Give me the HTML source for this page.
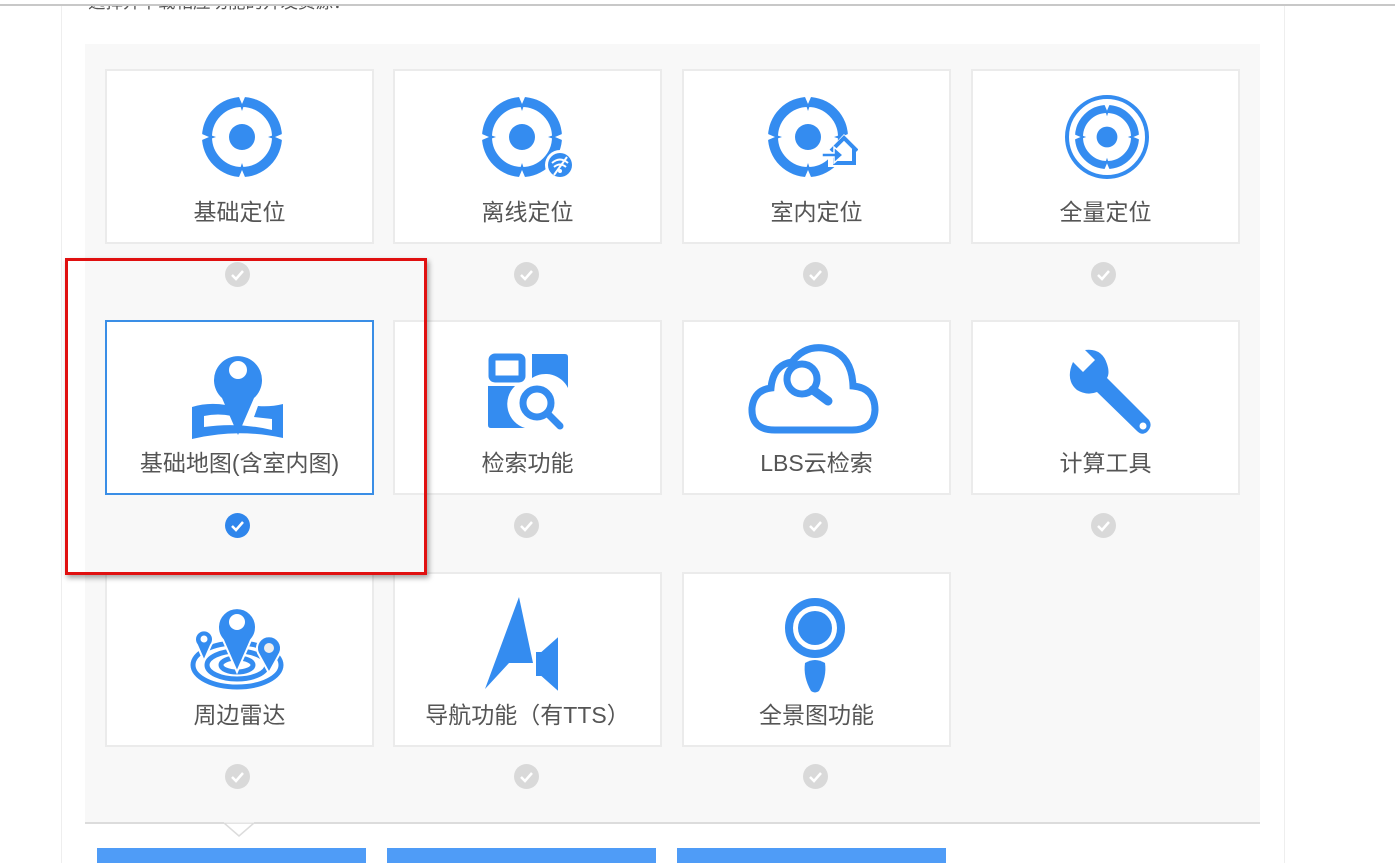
<!DOCTYPE html>
<html><head><meta charset="utf-8">
<style>
*{margin:0;padding:0;box-sizing:border-box}
body{width:1395px;height:863px;overflow:hidden;background:#fff;position:relative;font-family:"Liberation Sans","Noto Sans CJK SC",sans-serif;color:#555}
.abs{position:absolute}
.card{position:absolute;width:269px;height:175px;background:#fff;border:2px solid #ebebeb}
.card.sel{border:2px solid #3a8ee6}
.lbl{position:absolute;left:0;width:100%;text-align:center;font-size:23px;line-height:28px;color:#555;top:127px}
.chk{position:absolute;width:25px;height:25px;border-radius:50%;background:#d9d9d9}
.chk.on{background:#2f86ec}
.chk svg{position:absolute;left:0;top:0}
.ic{position:absolute;width:100px;height:100px}
.btn{position:absolute;top:848px;height:15px;width:269px;background:#4f9cf7}
</style></head><body>
<div class="abs" style="left:0;top:4px;width:1395px;height:2px;background:#c8c8c8"></div>
<div class="abs" style="left:61px;top:6px;width:1px;height:857px;background:#eee"></div>
<div class="abs" style="left:1284px;top:6px;width:1px;height:857px;background:#eee"></div>
<div class="abs" style="left:88px;top:-10px;font-size:17.5px;color:#555;line-height:24px">选择并下载相应功能的开发资源：</div>
<div class="abs" style="left:0;top:0;width:1395px;height:6px;background:#fff"></div>
<div class="abs" style="left:0;top:4px;width:1395px;height:2px;background:#c8c8c8"></div>
<div class="abs" style="left:85px;top:44px;width:1175px;height:778px;background:#f8f8f8"></div>
<div class="abs" style="left:85px;top:822px;width:1175px;height:2px;background:#dcdcdc"></div>
<svg class="abs" style="left:224px;top:822px" width="30" height="16"><polygon points="0,1 15,14 30,1" fill="#fff" stroke="#dcdcdc" stroke-width="1.5"/><rect x="0" y="-2" width="30" height="2.5" fill="#fff"/></svg>

<svg width="0" height="0" style="position:absolute">
<defs>
<g id="tgt">
<circle cx="50" cy="50" r="35" fill="none" stroke="#348cf0" stroke-width="10"/>
<circle cx="50" cy="50" r="13" fill="#348cf0"/>
<polygon points="46,12 54,12 50,24" fill="#348cf0"/>
<polygon points="46,88 54,88 50,76" fill="#348cf0"/>
<polygon points="12,46 12,54 24,50" fill="#348cf0"/>
<polygon points="88,46 88,54 76,50" fill="#348cf0"/>
<polygon points="47,10 53,10 50,17" fill="#fff"/>
<polygon points="47,90 53,90 50,83" fill="#fff"/>
<polygon points="10,47 10,53 17,50" fill="#fff"/>
<polygon points="90,47 90,53 83,50" fill="#fff"/>
</g>
</defs>
</svg>

<div class="card" style="left:105px;top:69px"><div class="lbl">基础定位</div></div>
<div class="card" style="left:393px;top:69px"><div class="lbl">离线定位</div></div>
<div class="card" style="left:682px;top:69px"><div class="lbl">室内定位</div></div>
<div class="card" style="left:971px;top:69px"><div class="lbl">全量定位</div></div>
<div class="card sel" style="left:105px;top:320px"><div class="lbl">基础地图(含室内图)</div></div>
<div class="card" style="left:393px;top:320px"><div class="lbl">检索功能</div></div>
<div class="card" style="left:682px;top:320px"><div class="lbl">LBS云检索</div></div>
<div class="card" style="left:971px;top:320px"><div class="lbl">计算工具</div></div>
<div class="card" style="left:105px;top:572px"><div class="lbl">周边雷达</div></div>
<div class="card" style="left:393px;top:572px"><div class="lbl">导航功能（有TTS）</div></div>
<div class="card" style="left:682px;top:572px"><div class="lbl">全景图功能</div></div>

<svg class="ic" style="left:192px;top:87px" viewBox="0 0 100 100"><use href="#tgt"/></svg>
<svg class="ic" style="left:472px;top:87px" viewBox="0 0 100 100"><use href="#tgt"/>
<circle cx="88" cy="78" r="15" fill="#fff"/><circle cx="88" cy="78" r="12" fill="#348cf0"/>
<path d="M80,76 Q88,69 96,76 M82,80 Q88,75 94,80" fill="none" stroke="#fff" stroke-width="2"/><circle cx="88" cy="84" r="2" fill="#fff"/><line x1="82" y1="88" x2="95" y2="70" stroke="#fff" stroke-width="2"/></svg>
<svg class="ic" style="left:758px;top:87px" viewBox="0 0 100 100"><use href="#tgt"/>
<path d="M70,64 L86,47 L102,64 V80 H70 Z" fill="#fff"/>
<path d="M73,64 L86,51 L99,64 M77,62 V76 H96 V62" fill="none" stroke="#348cf0" stroke-width="4"/>
<path d="M64,66 H76 V60 L85,68 L76,76 V70 H64 Z" fill="#348cf0" stroke="#fff" stroke-width="1.5"/></svg>
<svg class="ic" style="left:1057px;top:87px" viewBox="0 0 100 100"><circle cx="50" cy="50" r="40" fill="none" stroke="#348cf0" stroke-width="4"/><g transform="translate(50 50) scale(0.8) translate(-50 -50)"><use href="#tgt"/></g></svg>

<svg class="ic" style="left:188px;top:340px" viewBox="0 0 100 100">
<path d="M50,95 L34,58 A24,24 0 1 1 66,58 Z" fill="#348cf0"/><circle cx="50" cy="30" r="9" fill="#fff"/>
<path d="M4,67 Q20,62 38,65 L44,76 Q30,73 16,76 L16,87 Q50,82 84,90 L84,79 L66,77 L70,66 Q83,67 95,64 L95,98 Q50,88 4,99 Z" fill="#348cf0"/></svg>
<svg class="ic" style="left:477px;top:340px" viewBox="0 0 100 100">
<rect x="15" y="17" width="30" height="22" rx="3" fill="none" stroke="#348cf0" stroke-width="7"/>
<path d="M55,14 H88 Q91,14 91,17 V48 A25,25 0 0 0 55,38 Z" fill="#348cf0"/>
<path d="M11,46 H38 A25,25 0 0 0 48,88 H14 Q11,88 11,85 Z" fill="#348cf0"/>
<circle cx="60" cy="63" r="14" fill="none" stroke="#348cf0" stroke-width="7"/>
<line x1="70" y1="73" x2="83" y2="86" stroke="#348cf0" stroke-width="7" stroke-linecap="round"/></svg>
<svg class="ic" style="left:747px;top:340px;width:135px" viewBox="0 0 135 100">
<path d="M28,90 Q4,90 5,68 Q7,50 24,48 Q26,25 45,22 Q60,2 85,10 Q105,18 106,46 Q128,48 128,70 Q127,90 105,90 Z" fill="none" stroke="#348cf0" stroke-width="7"/>
<circle cx="55" cy="39" r="15" fill="#fff" stroke="#348cf0" stroke-width="7"/>
<line x1="66" y1="50" x2="81" y2="61" stroke="#348cf0" stroke-width="9" stroke-linecap="round"/></svg>
<svg class="ic" style="left:1057px;top:340px" viewBox="0 0 100 100">
<path d="M16,22 L26,32 L38,20 L28,10 Q45,8 50,24 Q53,33 50,38 L92,80 Q96,86 90,92 Q85,96 80,91 L40,52 Q30,56 20,50 Q8,40 16,22 Z" fill="#348cf0"/>
<circle cx="86" cy="86" r="3.5" fill="#fff"/></svg>

<svg class="ic" style="left:187px;top:595px" viewBox="0 0 100 100">
<ellipse cx="50" cy="70" rx="44" ry="22" fill="none" stroke="#348cf0" stroke-width="5"/>
<ellipse cx="50" cy="70" rx="30" ry="14" fill="none" stroke="#348cf0" stroke-width="5"/>
<ellipse cx="50" cy="70" rx="16" ry="7" fill="none" stroke="#348cf0" stroke-width="5"/>
<path d="M50,77 L36,45 A19,19 0 1 1 64,45 Z" fill="#348cf0" stroke="#fff" stroke-width="2"/><circle cx="50" cy="27" r="8" fill="#fff"/>
<path d="M17,66 L10,50 A9,9 0 1 1 24,50 Z" fill="#348cf0" stroke="#fff" stroke-width="2"/><circle cx="17" cy="44" r="3.5" fill="#fff"/>
<path d="M82,78 L71,58 A12,12 0 1 1 93,58 Z" fill="#348cf0" stroke="#fff" stroke-width="2"/><circle cx="82" cy="53" r="5" fill="#eee"/></svg>
<svg class="ic" style="left:475px;top:595px" viewBox="0 0 100 100">
<path d="M44,2 L10,94 L34,68 L58,68 Z" fill="#348cf0"/>
<path d="M60,56 H66 L84,40 V98 L66,82 H60 Z" fill="#348cf0" stroke="#fff" stroke-width="2"/></svg>
<svg class="ic" style="left:765px;top:595px" viewBox="0 0 100 100">
<circle cx="50" cy="33" r="26" fill="none" stroke="#348cf0" stroke-width="8"/>
<circle cx="50" cy="33" r="17" fill="#348cf0"/>
<path d="M40,68 Q50,62 60,68 Q62,82 54,96 Q50,99 46,96 Q38,82 40,68 Z" fill="#348cf0"/></svg>

<div class="chk" style="left:225px;top:262px"><svg width="25" height="25"><path d="M7,13 L11,17 L18,9" fill="none" stroke="#fff" stroke-width="2.5"/></svg></div>
<div class="chk" style="left:514px;top:262px"><svg width="25" height="25"><path d="M7,13 L11,17 L18,9" fill="none" stroke="#fff" stroke-width="2.5"/></svg></div>
<div class="chk" style="left:803px;top:262px"><svg width="25" height="25"><path d="M7,13 L11,17 L18,9" fill="none" stroke="#fff" stroke-width="2.5"/></svg></div>
<div class="chk" style="left:1091px;top:262px"><svg width="25" height="25"><path d="M7,13 L11,17 L18,9" fill="none" stroke="#fff" stroke-width="2.5"/></svg></div>
<div class="chk on" style="left:225px;top:513px"><svg width="25" height="25"><path d="M7,13 L11,17 L18,9" fill="none" stroke="#fff" stroke-width="2.5"/></svg></div>
<div class="chk" style="left:514px;top:513px"><svg width="25" height="25"><path d="M7,13 L11,17 L18,9" fill="none" stroke="#fff" stroke-width="2.5"/></svg></div>
<div class="chk" style="left:803px;top:513px"><svg width="25" height="25"><path d="M7,13 L11,17 L18,9" fill="none" stroke="#fff" stroke-width="2.5"/></svg></div>
<div class="chk" style="left:1091px;top:513px"><svg width="25" height="25"><path d="M7,13 L11,17 L18,9" fill="none" stroke="#fff" stroke-width="2.5"/></svg></div>
<div class="chk" style="left:225px;top:764px"><svg width="25" height="25"><path d="M7,13 L11,17 L18,9" fill="none" stroke="#fff" stroke-width="2.5"/></svg></div>
<div class="chk" style="left:514px;top:764px"><svg width="25" height="25"><path d="M7,13 L11,17 L18,9" fill="none" stroke="#fff" stroke-width="2.5"/></svg></div>
<div class="chk" style="left:803px;top:764px"><svg width="25" height="25"><path d="M7,13 L11,17 L18,9" fill="none" stroke="#fff" stroke-width="2.5"/></svg></div>

<div class="abs" style="left:65px;top:258px;width:362px;height:317px;border:3px solid #e01010;box-shadow:2px 3px 5px rgba(0,0,0,0.35)"></div>

<div class="btn" style="left:97px"></div>
<div class="btn" style="left:387px"></div>
<div class="btn" style="left:677px"></div>
</body></html>
